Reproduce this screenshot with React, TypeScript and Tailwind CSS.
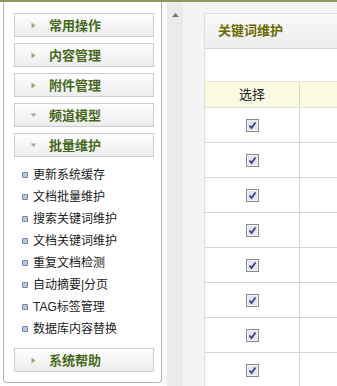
import React from 'react';

const menus = ['常用操作', '内容管理', '附件管理'];
const items = ['更新系统缓存', '文档批量维护', '搜索关键词维护', '文档关键词维护', '重复文档检测', '自动摘要|分页', 'TAG标签管理', '数据库内容替换'];

const Arrow = ({ open }: { open?: boolean }) =>
  open ? (
    <svg width="7" height="5" viewBox="0 0 7 5" className="shrink-0">
      <path d="M0.5 0.5 L6.5 0.5 L3.5 4 Z" fill="#a3ae8f" />
    </svg>
  ) : (
    <svg width="5" height="7" viewBox="0 0 5 7" className="shrink-0">
      <path d="M0.5 0.5 L4.5 3.5 L0.5 6.5 Z" fill="#8fb265" />
    </svg>
  );

const MenuButton = ({ label, open }: { label: string; open?: boolean }) => (
  <div className="flex h-[24px] w-[140px] items-center border border-[#cdcdcd] bg-gradient-to-b from-white to-[#ececec]">
    <div className="flex w-[34px] justify-center pl-[3px]">
      <Arrow open={open} />
    </div>
    <span className="text-[13px] font-bold leading-none text-[#47691d]">{label}</span>
  </div>
);

const Check = () => (
  <svg width="13" height="13" viewBox="0 0 13 13">
    <rect x="0.5" y="0.5" width="12" height="12" fill="#e2e5ee" stroke="#8a8a8a" />
    <rect x="1.5" y="1.5" width="10" height="10" fill="none" stroke="#f4f5f9" />
    <path d="M3.5 6.5 L5.5 9 L9.5 3.5" fill="none" stroke="#3d3d8e" strokeWidth="1.8" />
  </svg>
);

export default function App() {
  return (
    <div
      className="h-[386px] w-[337px] overflow-hidden border-t-2 border-[#8b9a57] bg-white text-[12px] text-[#222]"
      style={{ fontFamily: '"Liberation Sans", "Noto Sans CJK SC", sans-serif' }}
    >
      <div className="flex h-full">
        {/* left menu */}
        <div className="ml-[3px] flex h-[381px] w-[159px] shrink-0 flex-col rounded-b-[4px] border-x border-b border-[#b4b4aa] bg-white px-[10px] pt-[11px]">
          <div className="flex flex-col gap-[6px]">
            {menus.map((m) => (
              <MenuButton key={m} label={m} />
            ))}
            <MenuButton label="频道模型" open />
            <MenuButton label="批量维护" open />
          </div>
          <ul className="mt-[7px] flex flex-col pl-[8px]">
            {items.map((t) => (
              <li key={t} className="flex h-[22px] items-center gap-[5px]">
                <span className="h-[6px] w-[6px] rounded-[1px] border border-[#6f83a6] bg-[#b9c6dc]" />
                <span className="leading-none">{t}</span>
              </li>
            ))}
          </ul>
          <div className="mt-[8px]">
            <MenuButton label="系统帮助" />
          </div>
        </div>

        {/* splitter strip */}
        <div className="w-[5px] shrink-0 bg-[#fafafa]" />
        <div className="flex w-[16px] shrink-0 justify-center bg-[#ebebeb] pt-[11px]">
          <svg width="7" height="4" viewBox="0 0 7 4">
            <path d="M3.5 0 L7 4 L0 4 Z" fill="#777" />
          </svg>
        </div>

        {/* right content */}
        <div className="flex-1 bg-[#f4f4f4] pl-[21px] pt-[11px]">
          <div className="h-full border-l border-t border-[#dedede] bg-white">
            <div className="flex h-[35px] items-center border-b border-[#d6d6d6] bg-gradient-to-b from-[#f9f9f9] to-[#ededed] pl-[13px]">
              <span className="text-[13px] font-bold text-[#6b6b00]">关键词维护</span>
            </div>
            <div className="h-[32px]" />
            <div className="flex h-[27px] border-y border-[#e4e4cc] bg-[#fafae2]">
              <div className="flex w-[95px] items-center justify-center border-r border-[#dcdcc8] text-[13px]">选择</div>
              <div className="flex-1" />
            </div>
            {Array.from({ length: 8 }).map((_, i) => (
              <div key={i} className="flex h-[35px] border-b border-[#d4d4d4]">
                <div className="flex w-[95px] items-center justify-center border-r border-[#d4d4d4]">
                  <Check />
                </div>
                <div className="flex-1" />
              </div>
            ))}
          </div>
        </div>
      </div>
    </div>
  );
}
